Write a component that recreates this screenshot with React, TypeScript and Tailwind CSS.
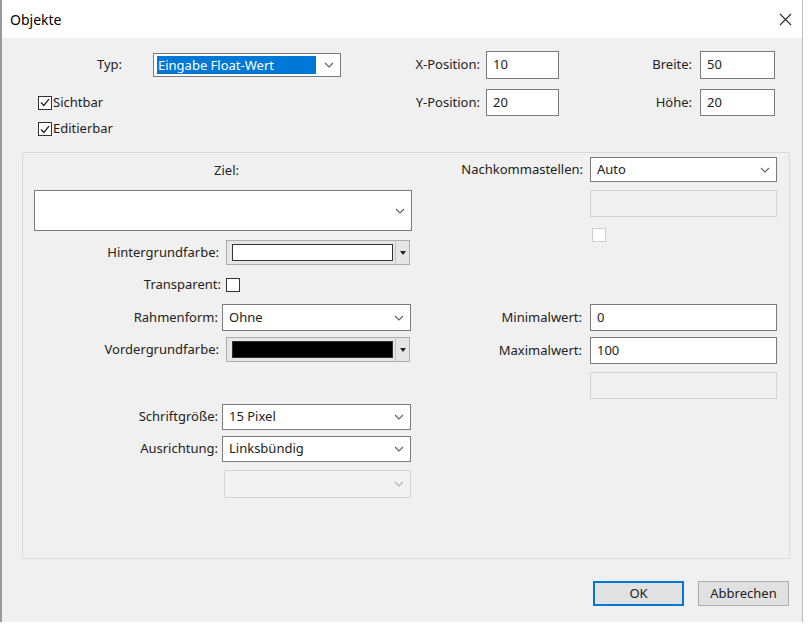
const font = "font-['Noto_Sans','Liberation_Sans',sans-serif]";

function Chevron({ color = '#606060' }: { color?: string }) {
  return (
    <svg width="10" height="6" viewBox="0 0 10 6" fill="none">
      <path d="M1 1 L5 5 L9 1" stroke={color} strokeWidth="1.1" />
    </svg>
  );
}

function Check({ checked }: { checked?: boolean }) {
  return (
    <div className="w-[14px] h-[14px] border border-[#333] bg-white flex items-center justify-center">
      {checked && (
        <svg width="10" height="9" viewBox="0 0 10 9" fill="none">
          <path d="M1 4.5 L3.8 7.5 L9 1.2" stroke="#222" strokeWidth="1.3" />
        </svg>
      )}
    </div>
  );
}

function Select({ value, w, h, disabled }: { value?: string; w: string; h: string; disabled?: boolean }) {
  return (
    <div
      className={`${w} ${h} flex items-center justify-between pl-[6px] pr-[6px] border ${
        disabled ? 'border-[#d4d4d4] bg-[#f2f2f2]' : 'border-[#7a7a7a] bg-white'
      }`}
    >
      <span className="text-[13px] text-[#222]">{value}</span>
      <Chevron color={disabled ? '#b0b0b0' : '#606060'} />
    </div>
  );
}

function Input({ value, w, h, disabled }: { value?: string; w: string; h: string; disabled?: boolean }) {
  return (
    <div
      className={`${w} ${h} flex items-center pl-[6px] border ${
        disabled ? 'border-[#d4d4d4] bg-[#f0f0f0]' : 'border-[#7a7a7a] bg-white'
      }`}
    >
      <span className="text-[13px] text-[#222]">{value}</span>
    </div>
  );
}

function ColorPicker({ color }: { color: string }) {
  return (
    <div className="w-[184px] h-[25px] border border-[#adadad] bg-[#e6e6e6] flex items-center">
      <div className={`ml-[5px] w-[161px] h-[17px] border border-[#333] ${color}`} />
      <div className="ml-[2px] h-full border-l border-[#c4c4c4] flex-1 flex items-center justify-center">
        <svg width="6" height="4" viewBox="0 0 6 4">
          <path d="M0 0 L6 0 L3 4 Z" fill="#222" />
        </svg>
      </div>
    </div>
  );
}

function Label({ text, w }: { text: string; w: string }) {
  return <div className={`${w} text-right text-[13px] text-[#222] shrink-0`}>{text}</div>;
}

export default function App() {
  return (
    <div className={`w-[809px] h-[626px] bg-white ${font} text-[#222]`}>
      <div className="w-[803px] h-[622px] border-l-2 border-r border-l-[#9a9a9a] border-r-[#bdbdbd] flex flex-col bg-[#f0f0f0]">
        {/* title bar */}
        <div className="h-[38px] bg-white flex items-center justify-between pl-[8px] pr-[10px]">
          <span className="text-[14px] text-black">Objekte</span>
          <svg width="13" height="13" viewBox="0 0 13 13" fill="none">
            <path d="M1 1 L12 12 M12 1 L1 12" stroke="#333" strokeWidth="1.2" />
          </svg>
        </div>

        {/* top fields */}
        <div className="pt-[13px] flex flex-col">
          <div className="flex items-center h-[28px]">
            <div className="w-[339px] flex items-center shrink-0">
              <Label text="Typ:" w="w-[120px]" />
              <div className="ml-[31px] w-[188px] h-[24px] border border-[#7a7a7a] bg-white flex items-center justify-between pl-[3px] pr-[6px]">
                <span className="w-[159px] h-[18px] bg-[#0078d7] text-white text-[13px] leading-[18px] pl-[1px]">Eingabe Float-Wert</span>
                <Chevron />
              </div>
            </div>
            <Label text="X-Position:" w="w-[139px]" />
            <div className="ml-[6px]"><Input value="10" w="w-[73px]" h="h-[28px]" /></div>
            <Label text="Breite:" w="w-[133px]" />
            <div className="ml-[8px]"><Input value="50" w="w-[75px]" h="h-[28px]" /></div>
          </div>

          <div className="flex items-center h-[27px] mt-[10px]">
            <div className="w-[339px] flex items-center gap-[1px] pl-[36px] shrink-0">
              <Check checked />
              <span className="text-[13px]">Sichtbar</span>
            </div>
            <Label text="Y-Position:" w="w-[139px]" />
            <div className="ml-[6px]"><Input value="20" w="w-[73px]" h="h-[27px]" /></div>
            <Label text="Höhe:" w="w-[133px]" />
            <div className="ml-[8px]"><Input value="20" w="w-[75px]" h="h-[27px]" /></div>
          </div>

          <div className="flex items-center h-[14px] mt-[6px] pl-[36px] gap-[1px]">
            <Check checked />
            <span className="text-[13px]">Editierbar</span>
          </div>
        </div>

        {/* group panel */}
        <div className="ml-[20px] mt-[16px] w-[768px] h-[407px] border border-[#dadada] rounded-[2px] flex">
          {/* left column */}
          <div className="w-[397px] flex flex-col">
            <div className="mt-[9px] h-[16px] text-center text-[13px] leading-[16px] pl-[10px]">Ziel:</div>
            <div className="mt-[12px] ml-[11px]">
              <Select w="w-[378px]" h="h-[41px]" />
            </div>
            <div className="mt-[9px] flex items-center">
              <Label text="Hintergrundfarbe:" w="w-[196px]" />
              <div className="ml-[7px]"><ColorPicker color="bg-white" /></div>
            </div>
            <div className="mt-[12px] flex items-center h-[15px]">
              <Label text="Transparent:" w="w-[198px]" />
              <div className="ml-[5px]"><Check /></div>
            </div>
            <div className="mt-[12px] flex items-center">
              <Label text="Rahmenform:" w="w-[195px]" />
              <div className="ml-[4px]"><Select value="Ohne" w="w-[189px]" h="h-[27px]" /></div>
            </div>
            <div className="mt-[6px] flex items-center">
              <Label text="Vordergrundfarbe:" w="w-[196px]" />
              <div className="ml-[7px]"><ColorPicker color="bg-black" /></div>
            </div>
            <div className="mt-[42px] flex items-center">
              <Label text="Schriftgröße:" w="w-[195px]" />
              <div className="ml-[4px]"><Select value="15 Pixel" w="w-[189px]" h="h-[26px]" /></div>
            </div>
            <div className="mt-[6px] flex items-center">
              <Label text="Ausrichtung:" w="w-[195px]" />
              <div className="ml-[4px]"><Select value="Linksbündig" w="w-[189px]" h="h-[26px]" /></div>
            </div>
            <div className="mt-[8px] ml-[201px]">
              <Select disabled w="w-[187px]" h="h-[28px]" />
            </div>
          </div>

          {/* right column */}
          <div className="flex-1 flex flex-col">
            <div className="mt-[4px] flex items-center">
              <Label text="Nachkommastellen:" w="w-[163px]" />
              <div className="ml-[7px]"><Select value="Auto" w="w-[187px]" h="h-[25px]" /></div>
            </div>
            <div className="mt-[8px] ml-[170px]">
              <Input disabled w="w-[187px]" h="h-[27px]" />
            </div>
            <div className="mt-[11px] ml-[172px] w-[14px] h-[14px] border border-[#cfcfcf] bg-white" />
            <div className="mt-[62px] flex items-center">
              <Label text="Minimalwert:" w="w-[162px]" />
              <div className="ml-[8px]"><Input value="0" w="w-[187px]" h="h-[27px]" /></div>
            </div>
            <div className="mt-[6px] flex items-center">
              <Label text="Maximalwert:" w="w-[162px]" />
              <div className="ml-[8px]"><Input value="100" w="w-[187px]" h="h-[27px]" /></div>
            </div>
            <div className="mt-[8px] ml-[170px]">
              <Input disabled w="w-[187px]" h="h-[27px]" />
            </div>
          </div>
        </div>

        {/* buttons */}
        <div className="mt-[22px] flex justify-end gap-[14px] pr-[13px]">
          <button className="w-[91px] h-[25px] border-2 border-[#0078d7] bg-[#e1e1e1] text-[13px] text-[#222]">OK</button>
          <button className="w-[91px] h-[25px] border border-[#adadad] bg-[#e1e1e1] text-[13px] text-[#222]">Abbrechen</button>
        </div>
      </div>
    </div>
  );
}
